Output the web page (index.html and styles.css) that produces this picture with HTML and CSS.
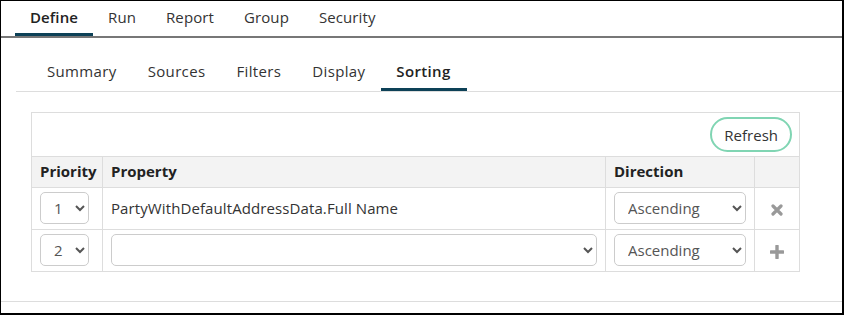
FILE: index.html
```html
<!DOCTYPE html>
<html lang="en">
<head>
    <meta charset="UTF-8" />
    <meta name="viewport" content="width=device-width, initial-scale=1" />
    <title>Report Designer - Sorting</title>
    <link rel="stylesheet" href="styles.css">
</head>
<body>
    <div class="frame">
        <nav class="main-tabs">
            <a class="main-tab active">Define</a>
            <a class="main-tab">Run</a>
            <a class="main-tab">Report</a>
            <a class="main-tab">Group</a>
            <a class="main-tab">Security</a>
        </nav>
        <nav class="sub-tabs">
            <a class="sub-tab">Summary</a>
            <a class="sub-tab">Sources</a>
            <a class="sub-tab">Filters</a>
            <a class="sub-tab">Display</a>
            <a class="sub-tab active">Sorting</a>
        </nav>
        <div class="content">
            <div class="panel">
                <div class="toolbar">
                    <button class="refresh-btn">Refresh</button>
                </div>
                <table class="sort-table">
                    <colgroup>
                        <col class="col-priority">
                        <col class="col-property">
                        <col class="col-direction">
                        <col class="col-action">
                    </colgroup>
                    <thead>
                        <tr>
                            <th>Priority</th>
                            <th>Property</th>
                            <th>Direction</th>
                            <th></th>
                        </tr>
                    </thead>
                    <tbody>
                        <tr>
                            <td>
                                <select class="priority-select">
                                    <option selected>1</option>
                                    <option>2</option>
                                </select>
                            </td>
                            <td class="property-name">PartyWithDefaultAddressData.Full Name</td>
                            <td>
                                <select class="wide-select">
                                    <option selected>Ascending</option>
                                    <option>Descending</option>
                                </select>
                            </td>
                            <td class="action-cell">
                                <svg class="icon" width="12" height="12" viewBox="0 0 12 12">
                                    <path d="M2 2 L10 10 M10 2 L2 10" stroke="#999" stroke-width="3.2" stroke-linecap="round" />
                                </svg>
                            </td>
                        </tr>
                        <tr>
                            <td>
                                <select class="priority-select">
                                    <option>1</option>
                                    <option selected>2</option>
                                </select>
                            </td>
                            <td>
                                <select class="wide-select">
                                    <option selected></option>
                                    <option>PartyWithDefaultAddressData.Full Name</option>
                                </select>
                            </td>
                            <td>
                                <select class="wide-select">
                                    <option selected>Ascending</option>
                                    <option>Descending</option>
                                </select>
                            </td>
                            <td class="action-cell">
                                <svg class="icon" width="14" height="14" viewBox="0 0 14 14">
                                    <path d="M7 1 V13 M1 7 H13" stroke="#999" stroke-width="3.4" stroke-linecap="round" />
                                </svg>
                            </td>
                        </tr>
                    </tbody>
                </table>
            </div>
        </div>
        <div class="footer-line"></div>
    </div>
</body>
</html>
```

FILE: styles.css
```css
html, body {
    margin: 0;
    height: 100%;
}
body {
    font-family: 'Open Sans', 'Noto Sans', sans-serif;
    font-size: 15px;
    color: #333;
    background: #fff;
}
.frame {
    box-sizing: border-box;
    height: 100vh;
    border: 1px solid #000;
    border-right-width: 2px;
    border-bottom-width: 2px;
    display: flex;
    flex-direction: column;
}
.main-tabs {
    display: flex;
    padding-left: 14px;
    border-bottom: 2px solid #777;
}
.main-tab {
    padding: 5px 15px 5px;
    line-height: 22px;
    border-bottom: 3px solid transparent;
    color: #333;
    letter-spacing: 0.1px;
    cursor: pointer;
}
.main-tab.active {
    font-weight: 600;
    color: #222;
    border-bottom-color: #0d4157;
}
.sub-tabs {
    display: flex;
    margin: 14px 0 0 15px;
    padding-left: 16px;
    border-bottom: 1px solid #ddd;
}
.sub-tab {
    padding: 8px 16px 6px 15px;
    line-height: 22px;
    border-bottom: 3px solid transparent;
    color: #333;
    letter-spacing: 0.35px;
    cursor: pointer;
}
.sub-tab.active {
    font-weight: 600;
    color: #222;
    border-bottom-color: #0d4157;
}
.content {
    flex: 1;
    padding: 20px 42px 0 30px;
}
.toolbar {
    display: flex;
    justify-content: flex-end;
    padding: 4px 7px 4px;
    border: 1px solid #ddd;
    border-bottom: none;
}
.refresh-btn {
    height: 35px;
    padding: 0 12px;
    border: 2px solid #80d5b3;
    border-radius: 18px;
    background: #fff;
    color: #333;
    font-family: inherit;
    font-size: 15px;
    cursor: pointer;
}
.sort-table {
    width: 100%;
    border-collapse: collapse;
    table-layout: fixed;
}
.col-priority { width: 71px; }
.col-direction { width: 149px; }
.col-action { width: 45px; }
.sort-table th,
.sort-table td {
    border: 1px solid #ddd;
    text-align: left;
}
.sort-table th {
    padding: 3px 8px 5px;
    line-height: 22px;
    background: #f3f3f3;
    font-weight: 700;
    color: #222;
}
.sort-table td {
    padding: 4px 8px 5px;
    line-height: 22px;
}
.property-name {
    color: #333;
    letter-spacing: 0.1px;
}
select {
    height: 32px;
    border: 1px solid #ccc;
    border-radius: 5px;
    background: #fff;
    color: #555;
    font-family: inherit;
    font-size: 15px;
}
.priority-select {
    padding: 0 9px 0 9px;
}
.wide-select {
    width: 100%;
    padding: 0 4px 0 9px;
}
.action-cell {
    text-align: center !important;
}
.icon {
    display: inline-block;
    vertical-align: middle;
}
.footer-line {
    height: 1px;
    background: #ddd;
    margin-bottom: 11px;
}
```
